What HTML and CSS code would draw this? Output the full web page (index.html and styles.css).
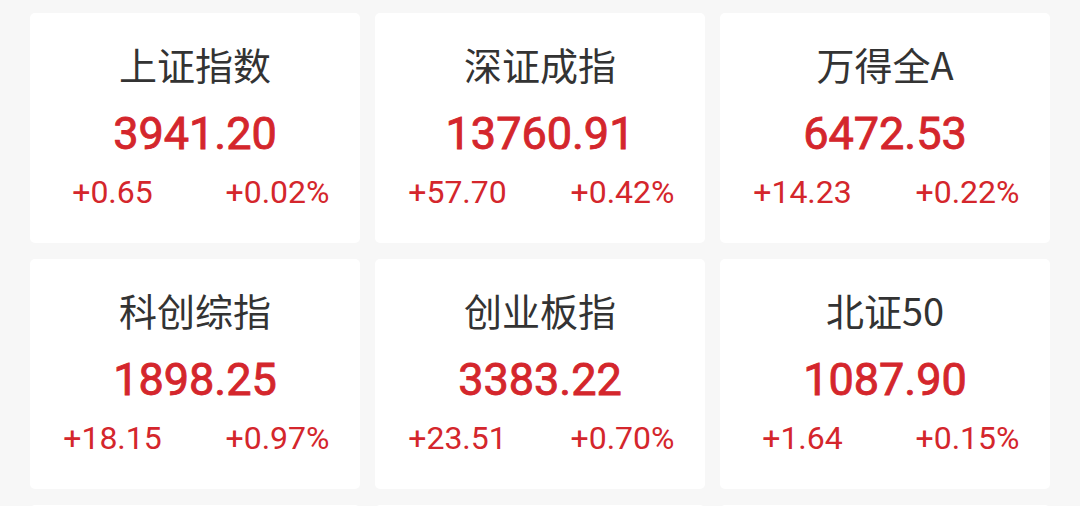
FILE: index.html
```html
<!DOCTYPE html>
<html lang="zh-CN">
<head>
    <meta charset="UTF-8">
    <meta name="viewport" content="width=device-width, initial-scale=1.0">
    <title>指数行情</title>
    <link rel="stylesheet" href="styles.css">
</head>
<body>
    <div class="grid">
        <!-- 第一行 -->
        <div class="card">
            <div class="name">上证指数</div>
            <div class="price">3941.20</div>
            <div class="change">
                <span>+0.65</span>
                <span>+0.02%</span>
            </div>
        </div>
        <div class="card">
            <div class="name">深证成指</div>
            <div class="price">13760.91</div>
            <div class="change">
                <span>+57.70</span>
                <span>+0.42%</span>
            </div>
        </div>
        <div class="card">
            <div class="name">万得全A</div>
            <div class="price">6472.53</div>
            <div class="change">
                <span>+14.23</span>
                <span>+0.22%</span>
            </div>
        </div>

        <!-- 第二行 -->
        <div class="card">
            <div class="name">科创综指</div>
            <div class="price">1898.25</div>
            <div class="change">
                <span>+18.15</span>
                <span>+0.97%</span>
            </div>
        </div>
        <div class="card">
            <div class="name">创业板指</div>
            <div class="price">3383.22</div>
            <div class="change">
                <span>+23.51</span>
                <span>+0.70%</span>
            </div>
        </div>
        <div class="card">
            <div class="name">北证50</div>
            <div class="price">1087.90</div>
            <div class="change">
                <span>+1.64</span>
                <span>+0.15%</span>
            </div>
        </div>

        <!-- 第三行（被截断） -->
        <div class="card"></div>
        <div class="card"></div>
        <div class="card"></div>
    </div>
</body>
</html>
```

FILE: styles.css
```css
body {
    margin: 0;
    background-color: #f7f7f7;
    font-family: Roboto, "Noto Sans CJK SC", sans-serif;
    height: 506px;
    overflow: hidden;
}

.grid {
    display: grid;
    grid-template-columns: repeat(3, 330px);
    grid-auto-rows: 230px;
    gap: 16px 15px;
    padding: 13px 30px;
}

.card {
    background-color: #ffffff;
    border-radius: 5px;
    display: flex;
    flex-direction: column;
    align-items: center;
    padding-top: 26px;
    box-sizing: border-box;
}

.name {
    font-family: "Noto Sans CJK SC", sans-serif;
    font-size: 38px;
    line-height: 50px;
    color: #333333;
}

.price {
    font-size: 45px;
    line-height: 50px;
    margin-top: 20px;
    color: #d4262c;
    -webkit-text-stroke: 0.9px #d4262c; /* 近似 medium 字重 */
}

.change {
    display: flex;
    width: 100%;
    margin-top: 13px;
    font-size: 32px;
    line-height: 40px;
    color: #d4262c;
}

.change span {
    flex: 1;
    text-align: center;
}
```
